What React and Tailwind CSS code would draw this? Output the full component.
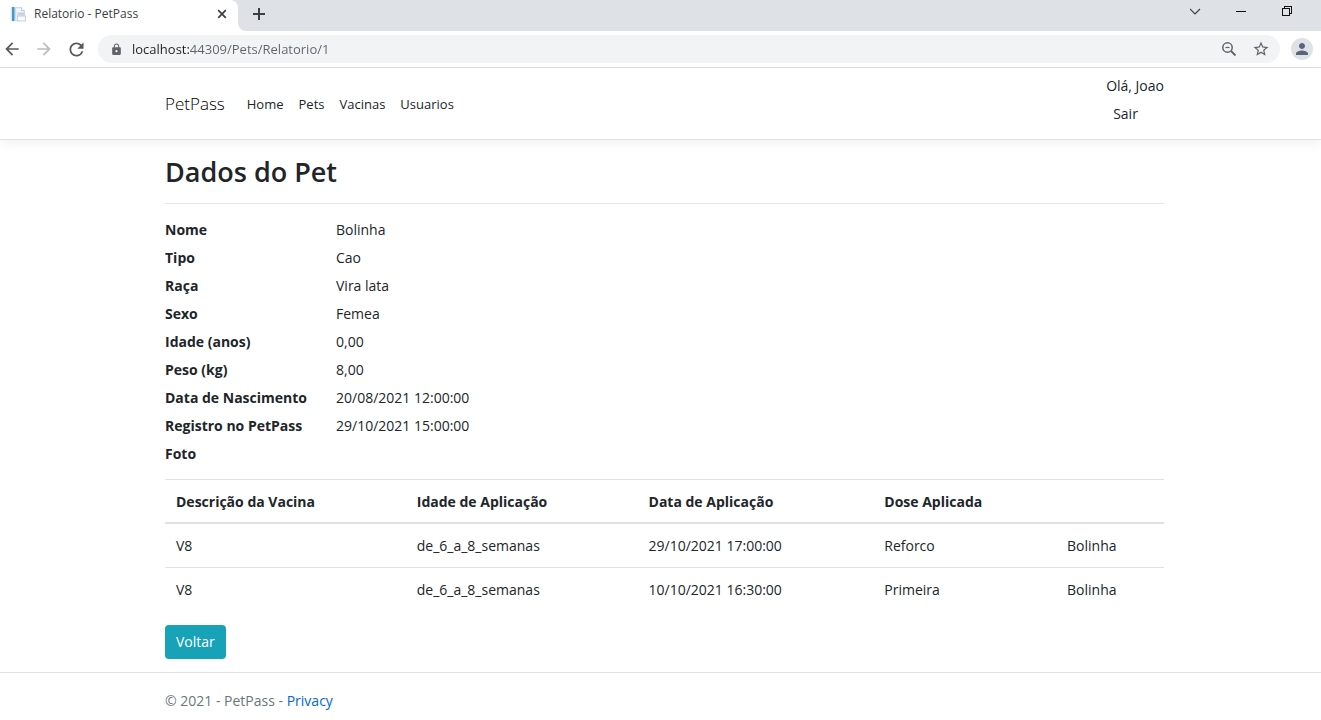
import React from "react";
import { MdArrowBack, MdArrowForward, MdRefresh, MdLock, MdStarBorder, MdPerson } from "react-icons/md";

const details = [
  ["Nome", "Bolinha"],
  ["Tipo", "Cao"],
  ["Raça", "Vira lata"],
  ["Sexo", "Femea"],
  ["Idade (anos)", "0,00"],
  ["Peso (kg)", "8,00"],
  ["Data de Nascimento", "20/08/2021 12:00:00"],
  ["Registro no PetPass", "29/10/2021 15:00:00"],
  ["Foto", ""],
];

const vaccines = [
  ["V8", "de_6_a_8_semanas", "29/10/2021 17:00:00", "Reforco", "Bolinha"],
  ["V8", "de_6_a_8_semanas", "10/10/2021 16:30:00", "Primeira", "Bolinha"],
];

function TabStrip() {
  return (
    <div className="flex h-[31px] bg-[#dee1e6]">
      <div className="flex w-[238px] shrink-0 items-center rounded-tr-lg bg-white pb-[3px] pl-[10px] pr-2">
        <svg width="16" height="16" viewBox="0 0 16 16" aria-hidden="true">
          <path d="M.5 1h4.500v14H.5z" fill="#dbe8f2" />
          <path d="M2 1h2.500v14H2z" fill="#4496cf" />
          <path d="M5.500 1.500h6l3 3v10h-9z" fill="#e9eef5" stroke="#d3dae4" />
          <path d="M7 3.500h4M7 5.500h5" stroke="#f8fafc" />
          <path d="M11.500 1.500v3h3" fill="#fff" stroke="#c3cbd6" />
          <rect x="7.500" y="6.500" width="7" height="3" fill="#c9d1dc" />
          <rect x="7.500" y="10" width="8" height="5" fill="#f7f9fc" stroke="#c8d0dc" />
        </svg>
        <span className="ml-2 grow text-xs text-[#3c4043]">Relatorio - PetPass</span>
        <button aria-label="Fechar guia" className="flex h-4 w-4 items-center justify-center">
          <svg width="10" height="10" viewBox="0 0 10 10" stroke="#3c4043" strokeWidth="1.700">
            <path d="M1.200 1.200l7.600 7.600M8.800 1.200L1.200 8.800" />
          </svg>
        </button>
      </div>
      <div className="flex grow bg-white">
        <div className="flex grow items-center rounded-bl-lg bg-[#dee1e6] pb-[3px] pl-[15px]">
          <button aria-label="Nova guia" className="flex h-4 w-4 items-center">
            <svg width="12" height="12" viewBox="0 0 12 12" stroke="#3c4043" strokeWidth="2">
              <path d="M6 0v12M0 6h12" />
            </svg>
          </button>
          <div className="ml-auto flex items-center gap-[35px] pb-[5px] pr-[28px]">
            <button aria-label="Pesquisar guias">
              <svg width="11" height="11" viewBox="0 0 11 11" fill="none" stroke="#3c4043" strokeWidth="1.200">
                <path d="M0 3l5 5 5-5" />
              </svg>
            </button>
            <button aria-label="Minimizar">
              <svg width="11" height="11" viewBox="0 0 11 11" shapeRendering="crispEdges">
                <rect y="5" width="10" height="1" fill="#111" />
              </svg>
            </button>
            <button aria-label="Restaurar">
              <svg width="11" height="11" viewBox="0 0 11 11" fill="none" stroke="#111" shapeRendering="crispEdges">
                <path d="M0.500 2.500h7v7h-7zM2.500 2.500v-2h7v7h-2" />
              </svg>
            </button>
          </div>
        </div>
      </div>
    </div>
  );
}

function Toolbar() {
  return (
    <div className="flex h-[37px] items-center border-b border-[#dcdee1] pl-[2px] pr-2">
      <div className="flex shrink-0 items-center gap-3 text-[#55585c]">
        <button aria-label="Voltar página"><MdArrowBack size={20} /></button>
        <button aria-label="Avançar" className="text-[#babcbe]"><MdArrowForward size={20} /></button>
        <button aria-label="Recarregar"><MdRefresh size={21} /></button>
      </div>
      <div className="ml-[11px] mr-[11px] flex h-7 grow items-center rounded-full bg-[#f1f3f4] pl-3 pr-[10px] text-[#5f6368]">
        <MdLock size={13} className="shrink-0" />
        <input
          aria-label="Endereço"
          defaultValue="localhost:44309/Pets/Relatorio/1"
          className="ml-[9px] min-w-0 grow bg-[linear-gradient(90deg,#202124_58px,#5f6368_58px)] bg-clip-text text-[13px] leading-5 text-transparent caret-black outline-none"
        />
        <button aria-label="Zoom">
          <svg width="16" height="16" viewBox="0 0 16 16" fill="none" stroke="#5f6368" strokeWidth="1.500">
            <circle cx="6.500" cy="6.500" r="4.700" />
            <path d="M10 10l4.500 4.500" strokeWidth="1.800" />
            <path d="M4.500 6.500h4" strokeWidth="1.200" />
          </svg>
        </button>
        <button aria-label="Favoritar" className="ml-[15px]"><MdStarBorder size={18} /></button>
      </div>
      <button aria-label="Perfil" className="flex h-[22px] w-[22px] items-center justify-center rounded-full bg-[#dee1e6] text-[#5a6478]">
        <MdPerson size={18} />
      </button>
    </div>
  );
}

function Container({ className = "", children }) {
  return (
    <div className="pl-2">
      <div className={"mx-auto max-w-[999px] " + className}>{children}</div>
    </div>
  );
}

export default function App() {
  return (
    <div className="min-h-screen bg-white font-['Open_Sans','Noto_Sans',sans-serif] text-sm leading-5 text-[#212529]">
      <TabStrip />
      <Toolbar />
      <header className="border-b border-[#dee2e6] shadow-[0_4px_11px_rgba(0,0,0,0.05)]">
        <Container className="flex h-[71px] items-center">
          <a href="#" className="text-[17px] font-light text-black">PetPass</a>
          <nav className="ml-[22px] flex gap-[15px] text-[13px]">
            <a href="#">Home</a>
            <a href="#">Pets</a>
            <a href="#">Vacinas</a>
            <a href="#">Usuarios</a>
          </nav>
          <div className="ml-auto flex flex-col gap-2 pb-2">
            <span>Olá, Joao</span>
            <button className="self-start pl-[7px]">Sair</button>
          </div>
        </Container>
      </header>
      <main>
        <Container className="pt-[14px]">
          <h1 className="text-[27px] font-semibold leading-9">Dados do Pet</h1>
          <hr className="mb-4 mt-[13px] border-[#e5e5e5]" />
          <dl className="grid grid-cols-[171px_1fr] gap-y-2">
            {details.map(([label, value]) => (
              <React.Fragment key={label}>
                <dt className="font-bold">{label}</dt>
                <dd>{value}</dd>
              </React.Fragment>
            ))}
          </dl>
          <table className="mt-[15px] w-full table-fixed border-collapse text-left">
            <colgroup>
              <col className="w-[24.1%]" />
              <col className="w-[23.2%]" />
              <col className="w-[23.6%]" />
              <col className="w-[18.3%]" />
              <col />
            </colgroup>
            <thead>
              <tr className="border-b-2 border-t border-b-[#dee2e6] border-t-[#dee2e6]">
                {["Descrição da Vacina", "Idade de Aplicação", "Data de Aplicação", "Dose Aplicada", ""].map((h) => (
                  <th key={h} className="px-[11px] pb-[10px] pt-3 font-bold leading-5">{h}</th>
                ))}
              </tr>
            </thead>
            <tbody>
              {vaccines.map((row) => (
                <tr key={row[2]} className="border-t border-[#dee2e6]">
                  {row.map((cell, i) => (
                    <td key={i} className="px-[11px] pb-[11px] pt-3">{cell}</td>
                  ))}
                </tr>
              ))}
            </tbody>
          </table>
          <button className="mt-[14px] h-[34px] rounded bg-[#17a2b8] px-[11px] text-white">Voltar</button>
        </Container>
      </main>
      <footer className="mt-[13px] border-t border-[#dee2e6] text-[#6c757d]">
        <Container className="py-[18px]">
          © 2021 - PetPass - <a href="#" className="text-[#0366d6]">Privacy</a>
        </Container>
      </footer>
    </div>
  );
}
